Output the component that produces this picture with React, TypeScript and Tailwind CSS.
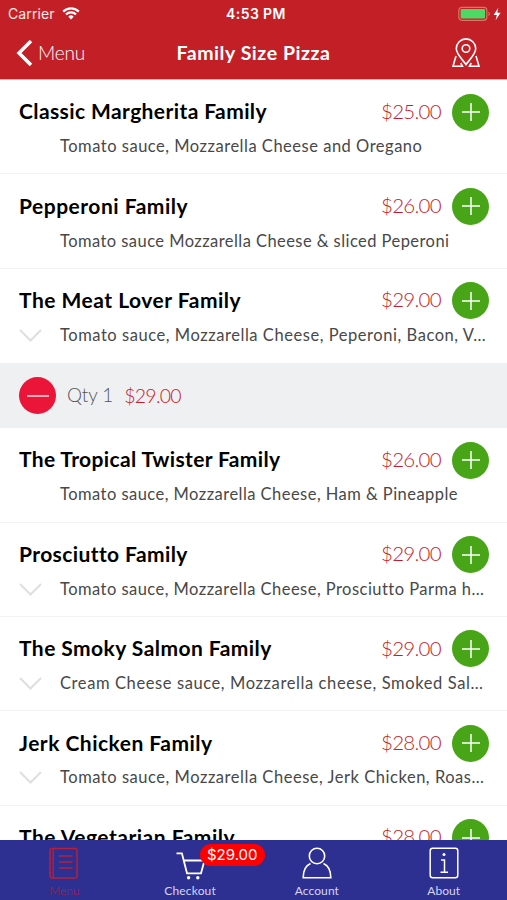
import { clsx } from 'clsx';

interface Pizza {
    name: string;
    price: string;
    description: string;
    expandable?: boolean;
    quantity?: number;
    nameClass?: string;
    descriptionClass?: string;
}

const PIZZAS: Pizza[] = [
    {
        name: 'Classic Margherita Family',
        price: '$25.00',
        description: 'Tomato sauce, Mozzarella Cheese and Oregano',
        nameClass: 'tracking-[0.4px]',
        descriptionClass: 'tracking-[0.51px]',
    },
    {
        name: 'Pepperoni Family',
        price: '$26.00',
        description: 'Tomato sauce Mozzarella Cheese & sliced Peperoni',
        nameClass: 'tracking-[0.5px]',
        descriptionClass: 'tracking-[0.44px]',
    },
    {
        name: 'The Meat Lover Family',
        price: '$29.00',
        description: 'Tomato sauce, Mozzarella Cheese, Peperoni, Bacon, V…',
        expandable: true,
        quantity: 1,
        nameClass: 'tracking-[0.5px]',
        descriptionClass: 'tracking-[0.55px]',
    },
    {
        name: 'The Tropical Twister Family',
        price: '$26.00',
        description: 'Tomato sauce, Mozzarella Cheese, Ham & Pineapple',
        nameClass: 'tracking-[0.36px]',
        descriptionClass: 'tracking-[0.46px]',
    },
    {
        name: 'Prosciutto Family',
        price: '$29.00',
        description: 'Tomato sauce, Mozzarella Cheese, Prosciutto Parma h…',
        expandable: true,
        nameClass: 'tracking-[0.4px]',
        descriptionClass: 'tracking-[0.46px]',
    },
    {
        name: 'The Smoky Salmon Family',
        price: '$29.00',
        description: 'Cream Cheese sauce, Mozzarella cheese, Smoked Sal…',
        expandable: true,
        nameClass: 'tracking-[0.44px]',
        descriptionClass: 'tracking-[0.6px]',
    },
    {
        name: 'Jerk Chicken Family',
        price: '$28.00',
        description: 'Tomato sauce, Mozzarella Cheese, Jerk Chicken, Roas…',
        expandable: true,
        nameClass: 'tracking-[0.48px]',
        descriptionClass: 'tracking-[0.53px]',
    },
    {
        name: 'The Vegetarian Family',
        price: '$28.00',
        description: '',
        nameClass: 'tracking-[0.5px]',
    },
];

function StatusBar() {
    return (
        <div className="grid h-[27px] grid-cols-3 items-center pl-2 pr-[5px] font-['Inter',sans-serif] text-[14px] leading-none text-white">
            <div className="flex items-center gap-[7px]">
                <span className="tracking-[0.1px] text-white/90">Carrier</span>
                <svg width="18" height="13" viewBox="0 0 18 13" fill="none" stroke="white" strokeWidth="2.2">
                    <path d="M1.2 4.6a11 11 0 0 1 15.6 0" />
                    <path d="M4 7.5a7 7 0 0 1 10 0" />
                    <path d="M9 12.5 6.3 9.7a3.8 3.8 0 0 1 5.4 0z" fill="white" stroke="none" />
                </svg>
            </div>
            <span className="pl-0.5 text-center font-semibold tracking-[0.4px]">4:53 PM</span>
            <svg className="justify-self-end" width="44" height="16" viewBox="0 0 44 16">
                <rect x="0.8" y="1.3" width="28" height="13" rx="3" fill="none" stroke="#df7369" strokeWidth="1.2" />
                <rect x="2.6" y="3.1" width="24.4" height="9.4" rx="1" fill="#4cd964" />
                <path d="M30.5 5.8c1.7.5 1.7 3.7 0 4.2z" fill="#df7369" />
                <path d="M40.3 1.8 35.6 8.9h3.2l-1.2 5.3 5-7.4h-3.3z" fill="white" />
            </svg>
        </div>
    );
}

function Header() {
    return (
        <header className="h-20 shrink-0 border-b border-[#eda9aa] bg-[#c22026]">
            <StatusBar />
            <div className="grid h-[52px] grid-cols-[1fr_auto_1fr] items-center pl-4 pr-[26px] text-white">
                <div className="flex items-center gap-[5px]">
                    <svg width="17" height="28" viewBox="0 0 17 28" fill="none" stroke="white" strokeWidth="3.5">
                        <path d="M15 2 3 14l12 12" />
                    </svg>
                    <span className="text-[19px] font-light tracking-[-0.2px]">Menu</span>
                </div>
                <h1 className="pl-2.5 text-[19.5px] font-bold tracking-[0.55px]">Family Size Pizza</h1>
                <svg className="justify-self-end" width="30" height="30" viewBox="0 0 30 30" fill="none" stroke="white" strokeWidth="1.6">
                    <path d="M15 26.5C12 22 5.3 16.5 5.3 10.6a9.7 9.7 0 0 1 19.4 0C24.7 16.5 18 22 15 26.5z" />
                    <circle cx="15" cy="10.5" r="3.8" />
                    <path d="M5 18 2 28.3h9.5L9.7 25M25 18 28 28.3h-9.5l1.8-3.3" />
                </svg>
            </div>
        </header>
    );
}

function AddButton() {
    return (
        <button className="flex size-[37px] items-center justify-center rounded-full bg-[#48a517]">
            <svg width="18" height="18" viewBox="0 0 18 18" stroke="white" strokeWidth="1.5">
                <path d="M9 0v18M0 9h18" />
            </svg>
        </button>
    );
}

function PizzaRow({ pizza }: { pizza: Pizza }) {
    return (
        <>
            <li
                className={clsx(
                    'h-[94.4px] shrink-0 border-b pl-[19px] pr-[18px] pt-[13.5px]',
                    pizza.quantity ? 'border-transparent' : 'border-[#f3f3f3]'
                )}
            >
                <div className="flex h-[37px] items-center">
                    <h2 className={clsx('flex-1 whitespace-nowrap pb-0.5 text-[21px] font-bold text-black', pizza.nameClass)}>
                        {pizza.name}
                    </h2>
                    <span className="mr-[11px] pb-0.5 text-[20.5px] font-light tracking-[-0.7px] text-[#c41c27]">
                        {pizza.price}
                    </span>
                    <AddButton />
                </div>
                <div className="flex h-8 items-center">
                    <div className="w-[41px] shrink-0">
                        {pizza.expandable && (
                            <svg width="23" height="13" viewBox="0 0 23 13" fill="none" stroke="#e0e0e0" strokeWidth="2.2">
                                <path d="m1 1 10.5 10.5L22 1" />
                            </svg>
                        )}
                    </div>
                    <p className={clsx('whitespace-nowrap text-[16.5px] text-[#484848]', pizza.descriptionClass)}>
                        {pizza.description}
                    </p>
                </div>
            </li>
            {pizza.quantity && (
                <li className="flex h-[65px] shrink-0 items-center bg-[#eff0f2] pl-[19px]">
                    <button className="flex size-[37px] items-center justify-center rounded-full bg-[#ea1538]">
                        <svg width="22" height="2" viewBox="0 0 22 2" stroke="white" strokeWidth="1.3">
                            <path d="M0 1h22" />
                        </svg>
                    </button>
                    <span className="ml-[11px] text-[19px] font-light tracking-[-0.1px] text-[#555]">
                        Qty {pizza.quantity}
                    </span>
                    <span className="ml-[11px] text-[19.5px] font-light tracking-[-0.75px] text-[#c41c27]">
                        {pizza.price}
                    </span>
                </li>
            )}
        </>
    );
}

function TabBar() {
    return (
        <nav className="grid h-[60px] shrink-0 grid-cols-4 bg-[#2e3091] pt-[6.5px] text-center text-[12px] leading-[14px] text-[#d5d6f5]">
            <div className="flex flex-col items-center gap-[5px] text-[#b51f3b]">
                <svg width="30" height="32" viewBox="0 0 30 32" fill="none" stroke="currentColor" strokeWidth="1.5">
                    <rect x="2" y="1.5" width="27" height="29.5" rx="2" />
                    <path d="M5.2 1.5V31M11 9h13.5M11 15h13.5M11 21h13.5" />
                    <path d="M1 6h2.5M1 11h2.5M1 16h2.5M1 21h2.5M1 26h2.5" strokeWidth="1" />
                </svg>
                <span className="pl-0.5 font-light">Menu</span>
            </div>
            <div className="relative flex flex-col items-center gap-[5px]">
                <svg className="overflow-visible" width="30" height="32" viewBox="0 0 30 32" fill="none" stroke="white" strokeWidth="1.8">
                    <path d="M1.5 6.3h5.4L12 26.3h14L29.5 13.5H9" />
                    <circle cx="13.6" cy="30.8" r="1.7" fill="white" stroke="none" />
                    <circle cx="22.8" cy="30.8" r="1.7" fill="white" stroke="none" />
                </svg>
                <span className="tracking-[0.15px]">Checkout</span>
                <span className="absolute -top-[3px] left-[73px] flex h-[22px] w-[65px] items-center justify-center rounded-full bg-[#fe0000] font-['Inter',sans-serif] text-[15px] text-white">
                    $29.00
                </span>
            </div>
            <div className="flex flex-col items-center gap-[5px]">
                <svg width="30" height="32" viewBox="0 0 30 32" fill="none" stroke="white" strokeWidth="1.6">
                    <circle cx="15" cy="9" r="7.7" />
                    <path d="M8.5 16.5C4 18.5 1.2 23 1.2 30.7h27.6c0-7.7-2.8-12.2-7.3-14.2" />
                </svg>
                <span className="tracking-[0.1px]">Account</span>
            </div>
            <div className="flex flex-col items-center gap-[5px]">
                <svg width="30" height="32" viewBox="0 0 30 32" fill="none" stroke="white" strokeWidth="1.5">
                    <rect x="1.2" y="1.2" width="27.6" height="29.6" rx="2.5" />
                    <path d="M12 13h3.5v12M11.5 25.3h7.5" />
                    <circle cx="15" cy="7.5" r="1.5" fill="white" stroke="none" />
                </svg>
                <span>About</span>
            </div>
        </nav>
    );
}

export default function App() {
    return (
        <div className="flex h-[900px] w-[507px] flex-col overflow-hidden bg-white font-['Lato',sans-serif]">
            <Header />
            <ul className="flex min-h-0 flex-1 flex-col overflow-hidden">
                {PIZZAS.map((pizza) => (
                    <PizzaRow key={pizza.name} pizza={pizza} />
                ))}
            </ul>
            <TabBar />
        </div>
    );
}
